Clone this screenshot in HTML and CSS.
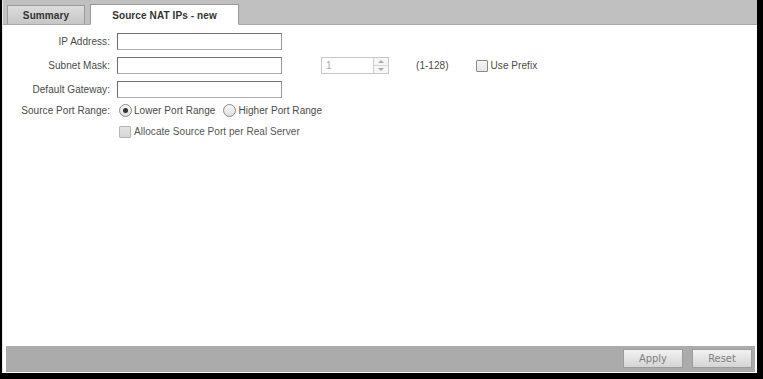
FILE: index.html
```html
<!DOCTYPE html>
<html>
<head>
<meta charset="utf-8">
<link rel="stylesheet" href="styles.css">
</head>
<body>
<div class="frame">
  <div class="tabbar">
    <div class="tab">Summary</div>
    <div class="tab active">Source NAT IPs - new</div>
  </div>
  <div class="content">
    <div class="form">
      <label class="lbl">IP Address:</label>
      <div class="field"><span class="input"></span></div>

      <label class="lbl">Subnet Mask:</label>
      <div class="field">
        <span class="input"></span>
        <span class="spinner"><span class="spin-val">1</span><span class="spin-btns"><span class="up"></span><span class="down"></span></span></span>
        <span class="range">(1-128)</span>
        <span class="check"></span><span class="chk-text">Use Prefix</span>
      </div>

      <label class="lbl">Default Gateway:</label>
      <div class="field"><span class="input"></span></div>

      <label class="lbl radlbl">Source Port Range:</label>
      <div class="field radios">
        <span class="radio on"></span><span class="r-text">Lower Port Range</span>
        <span class="radio"></span><span class="r-text">Higher Port Range</span>
      </div>

      <span class="lbl alloclbl"></span>
      <div class="field alloc">
        <span class="check disabled"></span><span class="chk-text">Allocate Source Port per Real Server</span>
      </div>
    </div>
  </div>
  <div class="footer">
    <button class="btn">Apply</button>
    <button class="btn">Reset</button>
  </div>
</div>
</body>
</html>
```

FILE: styles.css
```css
* { box-sizing: border-box; }
html, body { margin: 0; padding: 0; }
body {
  width: 763px;
  height: 379px;
  background: #000;
  font-family: "Liberation Sans", Arial, sans-serif;
  font-size: 10px;
  letter-spacing: 0.05px;
  color: #4a4a4a;
  overflow: hidden;
}
.frame {
  margin-left: 2px;
  width: 755px;
  height: 373px;
  background: #fff;
  border-left: 1px solid #e8e8e8;
  display: flex;
  flex-direction: column;
}
.tabbar {
  height: 25px;
  background: #c0c0c0;
  border-bottom: 1px solid #a9a9a9;
  display: flex;
  align-items: flex-end;
  padding-left: 4px;
  gap: 5px;
}
.tab {
  width: 78px;
  height: 20px;
  margin-bottom: -1px;
  border: 1px solid #9a9a9a;
  border-bottom: 1px solid #a9a9a9;
  background: linear-gradient(#dcdcdc, #c6c6c6);
  font-weight: bold;
  font-size: 10px;
  letter-spacing: 0.1px;
  color: #333;
  display: flex;
  align-items: center;
  justify-content: center;
  padding-top: 1px;
}
.tab.active {
  width: 149px;
  height: 21px;
  background: #fff;
  border-bottom-color: #fff;
  color: #333;
}
.content {
  flex: 1;
  padding-top: 8px;
}
.form {
  display: grid;
  grid-template-columns: 107px 1fr;
  column-gap: 7px;
  row-gap: 7px;
  grid-auto-rows: 17px;
}
.lbl {
  text-align: right;
  line-height: 17px;
}
.field {
  display: flex;
  align-items: center;
}
.input {
  width: 165px;
  height: 17px;
  border: 1px solid #6e6e6e;
  border-right-color: #999;
  border-bottom-color: #aaa;
  background: #fff;
}
.spinner {
  margin-left: 39px;
  width: 68px;
  height: 17px;
  border: 1px solid #c8c8c8;
  display: flex;
  background: #fff;
}
.spin-val {
  flex: 1;
  color: #aaa;
  padding-left: 4px;
  line-height: 15px;
}
.spin-btns {
  width: 15px;
  border-left: 1px solid #d0d0d0;
  display: flex;
  flex-direction: column;
}
.spin-btns span {
  flex: 1;
  display: flex;
  align-items: center;
  justify-content: center;
  background: #f6f6f6;
}
.spin-btns .up { border-bottom: 1px solid #d8d8d8; }
.spin-btns .up::after {
  content: "";
  border-left: 3px solid transparent;
  border-right: 3px solid transparent;
  border-bottom: 3px solid #aaa;
}
.spin-btns .down::after {
  content: "";
  border-left: 3px solid transparent;
  border-right: 3px solid transparent;
  border-top: 3px solid #aaa;
}
.range {
  margin-left: 27px;
}
.check {
  width: 12px;
  height: 12px;
  border: 1px solid #8a8a8a;
  background: linear-gradient(#f4f4f4, #e6e6e6);
  border-radius: 1px;
}
.field > .range + .check { margin-left: 27px; }
.chk-text { margin-left: 3px; }
.check.disabled {
  border-color: #b5b5b5;
  background: linear-gradient(#e4e4e4, #d6d6d6);
}
.radlbl, .radios {
  align-self: start;
  height: 17px;
  margin-top: -3px;
}
.alloclbl, .alloc {
  align-self: start;
  height: 17px;
  margin-top: -6px;
}
.alloc .check { margin-left: 2px; }
.alloc .chk-text { color: #555; }
.radio {
  width: 13px;
  height: 13px;
  border-radius: 50%;
  border: 1px solid #8a8a8a;
  background: linear-gradient(#f6f6f6, #e0e0e0);
  display: flex;
  align-items: center;
  justify-content: center;
  margin-left: 2px;
}
.radio.on::after {
  content: "";
  width: 5px;
  height: 5px;
  border-radius: 50%;
  background: #333;
}
.r-text { margin-left: 2px; margin-right: 6px; }
.footer {
  margin: 0 2px 1px 3px;
  height: 26px;
  background: #ababab;
  display: flex;
  justify-content: flex-end;
  align-items: flex-start;
  padding-top: 3px;
  padding-right: 3px;
  gap: 9px;
}
.btn {
  width: 60px;
  height: 19px;
  border: 1px solid #9c9c9c;
  background: linear-gradient(#f2f2f2, #d4d4d4);
  font-family: "DejaVu Sans Condensed", "DejaVu Sans", sans-serif;
  font-stretch: condensed;
  font-size: 11px;
  letter-spacing: 0;
  color: #7f7f7f;
  padding: 0;
  margin: 0;
}
```
